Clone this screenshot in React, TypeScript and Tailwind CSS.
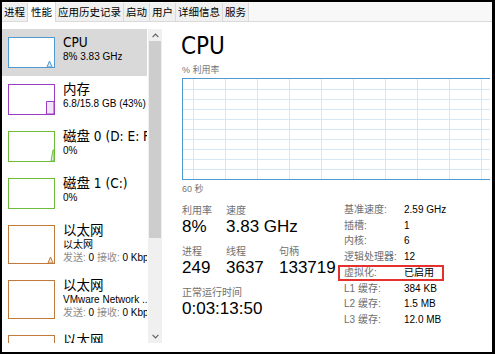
import type { ReactNode } from 'react'

const TABS = ['进程', '性能', '应用历史记录', '启动', '用户', '详细信息', '服务'] as const

type Kind = 'cpu' | 'mem' | 'disk' | 'net' | 'none'

interface ListItem {
  title: string
  lines: ReactNode[]
  color: string
  fill: string
  kind: Kind
  tall?: boolean
  selected?: boolean
}

const NetLine = () => (
  <>
    <span className="text-[#8c8c8c]">发送:</span> 0 <span className="text-[#8c8c8c]">接收:</span> 0 Kbps
  </>
)

const ITEMS: ListItem[] = [
  { title: 'CPU', lines: ['8% 3.83 GHz'], color: '#4f9ad2', fill: '#d8eaf7', kind: 'cpu', selected: true },
  { title: '内存', lines: ['6.8/15.8 GB (43%)'], color: '#9b3dc1', fill: '#f1e5f7', kind: 'mem' },
  { title: '磁盘 0 (D: E: F:)', lines: ['0%'], color: '#6dbc3c', fill: '#e3f2d8', kind: 'disk' },
  { title: '磁盘 1 (C:)', lines: ['0%'], color: '#6dbc3c', fill: '#e3f2d8', kind: 'none' },
  { title: '以太网', lines: ['以太网', <NetLine key="n" />], color: '#c07a3c', fill: '#f6e6d8', kind: 'net', tall: true },
  { title: '以太网', lines: ['VMware Network ...', <NetLine key="n" />], color: '#c07a3c', fill: '#f6e6d8', kind: 'none', tall: true },
  { title: '以太网', lines: ['VMware Network ...', <NetLine key="n" />], color: '#c07a3c', fill: '#f6e6d8', kind: 'none', tall: true },
]

function Spark({ kind, color, fill, h }: { kind: Kind; color: string; fill: string; h: number }) {
  const b = h
  let pts = ''
  if (kind === 'cpu') pts = `38,${b} 40.5,${b - 6} 43,${b}`
  if (kind === 'mem') pts = `37.5,${b} 37.5,${b - 12.5} 45,${b - 12.5} 45,${b}`
  if (kind === 'disk') pts = `42,${b} 44,${b - 11} 45,${b - 11} 45,${b}`
  if (kind === 'net') pts = `39,${b} 41.5,${b - 6} 44,${b}`
  if (!pts) return null
  return (
    <svg width={45} height={h} className="block">
      <polygon points={pts} fill={fill} stroke={color} strokeWidth={1} />
    </svg>
  )
}

function Chevron({ up }: { up?: boolean }) {
  return (
    <svg width={7} height={5} viewBox="0 0 7 5">
      <path
        d={up ? 'M0.6 4.2 L3.5 1.2 L6.4 4.2' : 'M0.6 0.8 L3.5 3.8 L6.4 0.8'}
        fill="none"
        stroke="#606060"
        strokeWidth={1.2}
      />
    </svg>
  )
}

function ResourceItem({ item }: { item: ListItem }) {
  const inner = item.tall ? 37 : 29
  return (
    <div className={`flex items-start pt-[6px] pb-[8px] pl-[6px] ${item.selected ? 'bg-[#d9d9d9]' : ''}`}>
      <div
        className="mt-[2px] w-[47px] shrink-0 border bg-white"
        style={{ borderColor: item.color, height: inner + 2 }}
      >
        <Spark kind={item.kind} color={item.color} fill={item.fill} h={inner} />
      </div>
      <div className="ml-[8px] min-w-0 overflow-hidden whitespace-nowrap text-black">
        <div className="font-['DejaVu_Sans_Condensed','Noto_Sans_CJK_SC',sans-serif] text-[13.5px] leading-[15px]">
          {item.title}
        </div>
        {item.lines.map((l, i) => (
          <div key={i} className="text-[10px] leading-[13px]">
            {l}
          </div>
        ))}
      </div>
    </div>
  )
}

function CpuGraph() {
  const rows = [10, 20, 30, 40, 50, 60, 70, 80, 90]
  const cols = Array.from({ length: 11 }, (_, i) => 10 + i * 32)
  return (
    <div className="h-[102px] w-[340px] shrink-0 border border-[#4f9ad2] bg-white">
      <svg width={338} height={100} className="block">
        {rows.map((y) => (
          <line key={`r${y}`} x1={0} x2={338} y1={y + 0.5} y2={y + 0.5} stroke="#d6e8f5" strokeWidth={1} />
        ))}
        {cols.map((x) => (
          <line key={`c${x}`} x1={x + 0.5} x2={x + 0.5} y1={0} y2={100} stroke="#d6e8f5" strokeWidth={1} />
        ))}
      </svg>
    </div>
  )
}

const SPECS: [string, string][] = [
  ['基准速度:', '2.59 GHz'],
  ['插槽:', '1'],
  ['内核:', '6'],
  ['逻辑处理器:', '12'],
  ['虚拟化:', '已启用'],
  ['L1 缓存:', '384 KB'],
  ['L2 缓存:', '1.5 MB'],
  ['L3 缓存:', '12.0 MB'],
]

function Stat({ label, value, w }: { label: string; value: string; w?: string }) {
  return (
    <div className={w}>
      <div className="text-[10px] leading-[13px] text-[#707070]">{label}</div>
      <div className="whitespace-nowrap text-[17px] leading-[20px] text-black">{value}</div>
    </div>
  )
}

export default function App() {
  return (
    <div className="h-[354px] w-[495px] overflow-hidden border-2 border-r-[3px] border-black bg-white font-['Liberation_Sans','Noto_Sans_CJK_SC',sans-serif] select-none">
      {/* tabs */}
      <div className="flex h-[20px] items-start border-b border-[#dadada] bg-[#f8f8f8]">
        {TABS.map((t) =>
          t === '性能' ? (
            <div
              key={t}
              className="flex h-[20px] items-center border-r border-[#dadada] bg-white px-[3px] text-[10.5px] leading-none text-black"
            >
              {t}
            </div>
          ) : (
            <div
              key={t}
              className="mt-[1px] flex h-[18px] items-center border-r border-[#dadada] bg-[#f0f0f0] px-[2px] text-[10.5px] leading-none text-black"
            >
              {t}
            </div>
          ),
        )}
      </div>

      <div className="flex h-[331px]">
        {/* left list */}
        <div className="flex pt-[7px]">
          <div className="h-[314px] w-[145px] overflow-hidden">
            {ITEMS.map((it, i) => (
              <ResourceItem key={i} item={it} />
            ))}
          </div>
          <div className="ml-[1px] flex h-[314px] w-[14px] flex-col bg-[#f0f0f0]">
            <div className="flex h-[12px] items-center justify-center">
              <Chevron up />
            </div>
            <div className="mx-[1px] h-[197px] bg-[#cdcdcd]" />
            <div className="flex-1" />
            <div className="flex h-[14px] items-center justify-center">
              <Chevron />
            </div>
          </div>
        </div>

        {/* right detail */}
        <div className="mr-[2px] min-w-0 flex-1 overflow-hidden pl-[20px] pt-[10px]">
          <div className="-ml-px font-['DejaVu_Sans_Condensed','Liberation_Sans',sans-serif] text-[24px] leading-[28px] text-black">
            CPU
          </div>
          <div className="mt-[4px] text-[9px] leading-[12px] text-[#777777]">% 利用率</div>
          <div className="mt-[2px]">
            <CpuGraph />
          </div>
          <div className="mt-[3px] text-[9px] leading-[12px] text-[#777777]">60 秒</div>

          <div className="mt-[7px] flex items-start">
            <div className="flex w-[162px] flex-col gap-[8px] pt-[2px]">
              <div className="flex">
                <Stat label="利用率" value="8%" w="w-[44px]" />
                <Stat label="速度" value="3.83 GHz" />
              </div>
              <div className="flex">
                <Stat label="进程" value="249" w="w-[44px]" />
                <Stat label="线程" value="3637" w="w-[53px]" />
                <Stat label="句柄" value="133719" />
              </div>
              <Stat label="正常运行时间" value="0:03:13:50" />
            </div>

            <div className="relative">
              <div className="grid grid-cols-[60px_auto] text-[10px] leading-[15.7px]">
                {SPECS.map(([k, v]) => (
                  <div key={k} className="contents">
                    <div className="whitespace-nowrap text-[#6e6e6e]">{k}</div>
                    <div className="whitespace-nowrap text-black">{v}</div>
                  </div>
                ))}
              </div>
              <div className="pointer-events-none absolute left-[-6px] top-[62.8px] h-[16px] w-[106px] border-2 border-[#e5302e]" />
            </div>
          </div>
        </div>
      </div>
    </div>
  )
}
